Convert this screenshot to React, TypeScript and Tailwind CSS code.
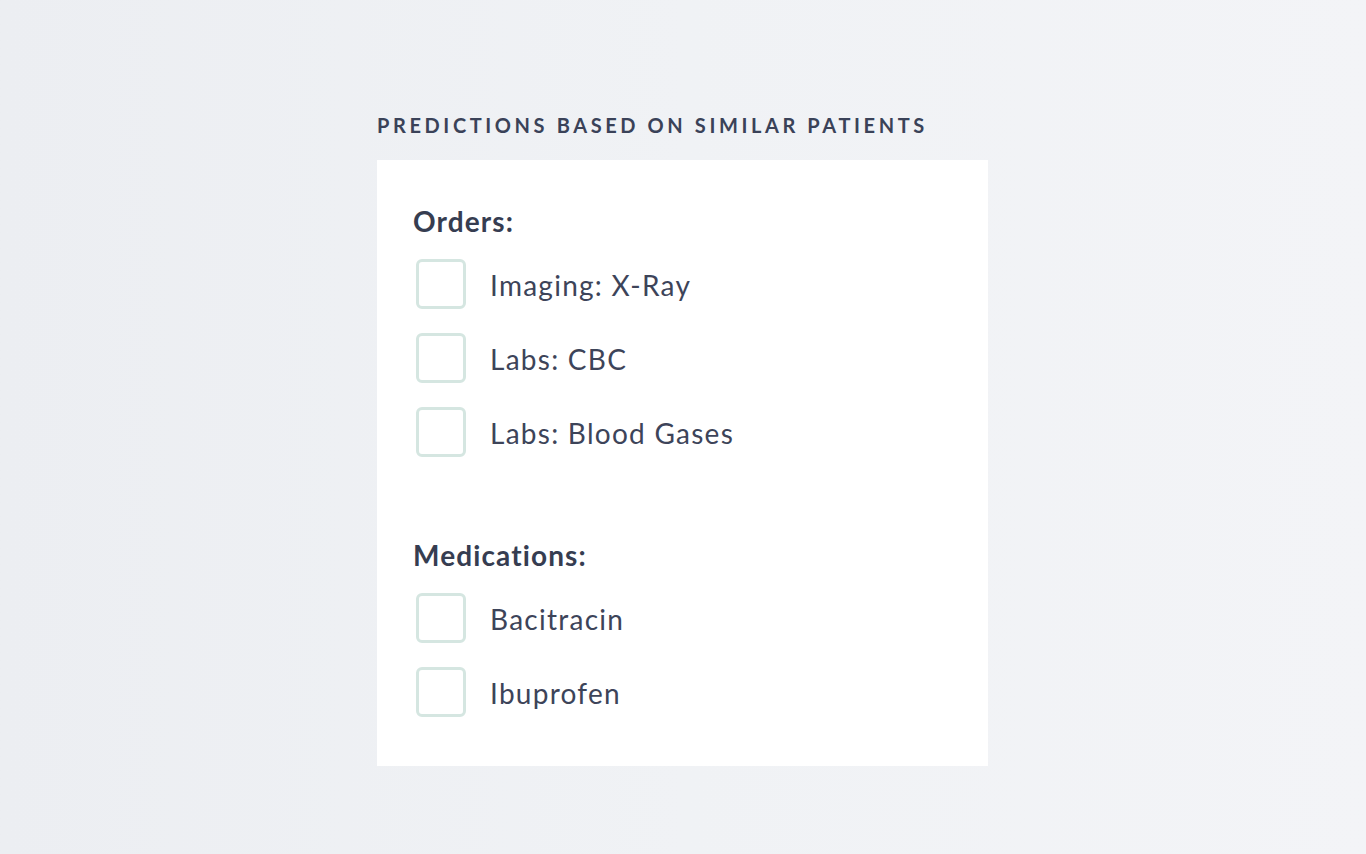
const orders = ["Imaging: X-Ray", "Labs: CBC", "Labs: Blood Gases"];
const medications = ["Bacitracin", "Ibuprofen"];

function CheckRow({ label }: { label: string }) {
  return (
    <label className="flex h-[50px] items-center gap-[24px]">
      <span className="ml-[3px] box-border h-[50px] w-[50px] shrink-0 rounded-[6px] border-[3px] border-[#d5e6e1] bg-white" />
      <span className="pt-[2px] text-[28px] leading-none tracking-[0.045em] text-[#3d4459]">{label}</span>
    </label>
  );
}

function Section({ title, items }: { title: string; items: string[] }) {
  return (
    <div>
      <h2 className="text-[28px] font-bold leading-none tracking-[0.04em] text-[#363d51]">{title}</h2>
      <div className="mt-[24px] flex flex-col gap-[24px]">
        {items.map((item) => (
          <CheckRow key={item} label={item} />
        ))}
      </div>
    </div>
  );
}

export default function App() {
  return (
    <div
      className="min-h-[854px] w-full bg-gradient-to-r from-[#eceef2] via-[#f0f2f5] to-[#f3f4f7] pt-[115px]"
      style={{ fontFamily: "Lato, 'Noto Sans', sans-serif" }}
    >
      <div className="ml-[377px] w-[611px]">
        <h1 className="text-[20px] font-bold uppercase leading-none tracking-[0.18em] text-[#3a4258]">
          Predictions based on similar patients
        </h1>
        <div className="mt-[25px] flex h-[606px] flex-col gap-[84px] bg-white pl-[36px] pt-[47px]">
          <Section title="Orders:" items={orders} />
          <Section title="Medications:" items={medications} />
        </div>
      </div>
    </div>
  );
}
